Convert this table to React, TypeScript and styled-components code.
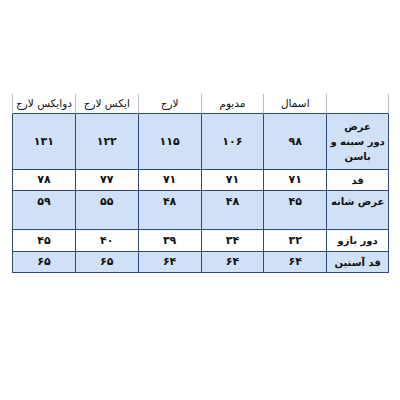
import React from "react";
import styled, { createGlobalStyle } from "styled-components";

const Global = createGlobalStyle`
  html, body { margin: 0; padding: 0; background: #ffffff; }
  body { font-family: "DejaVu Sans", "Noto Sans", sans-serif; }
`;

const Page = styled.div`
  width: 400px;
  height: 400px;
  padding: 94px 0 0 12px;
  box-sizing: border-box;
`;

const Grid = styled.div`
  direction: rtl;
  width: 377px;
  display: grid;
  grid-template-columns: repeat(6, 1fr);
  grid-template-rows: 20px 56px 21px 39px 22px 21px;
`;

const Cell = styled.div<{ $head?: boolean; $top?: boolean; $fill?: boolean }>`
  box-sizing: border-box;
  display: flex;
  justify-content: center;
  align-items: ${(p) => (p.$top ? "flex-start" : "center")};
  padding-top: ${(p) => (p.$top ? "3px" : "0")};
  text-align: center;
  white-space: nowrap;
  color: #111;
  font-size: ${(p) => (p.$head ? "10.5px" : "11px")};
  letter-spacing: ${(p) => (p.$head ? "-0.2px" : "0")};
  font-weight: ${(p) => (p.$head ? 400 : 700)};
  line-height: 1.45;
  background: ${(p) => (p.$fill ? "#cfe0f7" : "#ffffff")};
  border-left: 1px solid ${(p) => (p.$head ? "#b9bec6" : "#2d4a78")};
  border-bottom: 1px solid #2d4a78;
  &:nth-child(6n + 1) {
    border-right: 1px solid ${(p) => (p.$head ? "#b9bec6" : "#2d4a78")};
  }
`;

const Label = styled.span`
  display: block;
  font-size: 10px;
  letter-spacing: -0.3px;
  line-height: 1.5;
`;

const headers = ["", "اسمال", "مدیوم", "لارج", "ایکس لارج", "دوایکس لارج"];

const rows: { label: string[]; values: string[]; fill: boolean; top?: boolean }[] = [
  { label: ["عرض", "دور سینه و", "باسن"], values: ["۹۸", "۱۰۶", "۱۱۵", "۱۲۲", "۱۳۱"], fill: true },
  { label: ["قد"], values: ["۷۱", "۷۱", "۷۱", "۷۷", "۷۸"], fill: false },
  { label: ["عرض شانه"], values: ["۴۵", "۴۸", "۴۸", "۵۵", "۵۹"], fill: true, top: true },
  { label: ["دور بازو"], values: ["۳۲", "۳۴", "۳۹", "۴۰", "۴۵"], fill: false },
  { label: ["قد آستین"], values: ["۶۴", "۶۴", "۶۴", "۶۵", "۶۵"], fill: true },
];

export default function App() {
  return (
    <Page>
      <Global />
      <Grid>
        {headers.map((h, i) => (
          <Cell key={"h" + i} $head>
            {h}
          </Cell>
        ))}
        {rows.map((r, ri) => (
          <React.Fragment key={ri}>
            <Cell $fill={r.fill} $top={r.top}>
              <Label>
                {r.label.map((l, li) => (
                  <React.Fragment key={li}>
                    {li > 0 && <br />}
                    {l}
                  </React.Fragment>
                ))}
              </Label>
            </Cell>
            {r.values.map((v, vi) => (
              <Cell key={vi} $fill={r.fill} $top={r.top}>
                {v}
              </Cell>
            ))}
          </React.Fragment>
        ))}
      </Grid>
    </Page>
  );
}
